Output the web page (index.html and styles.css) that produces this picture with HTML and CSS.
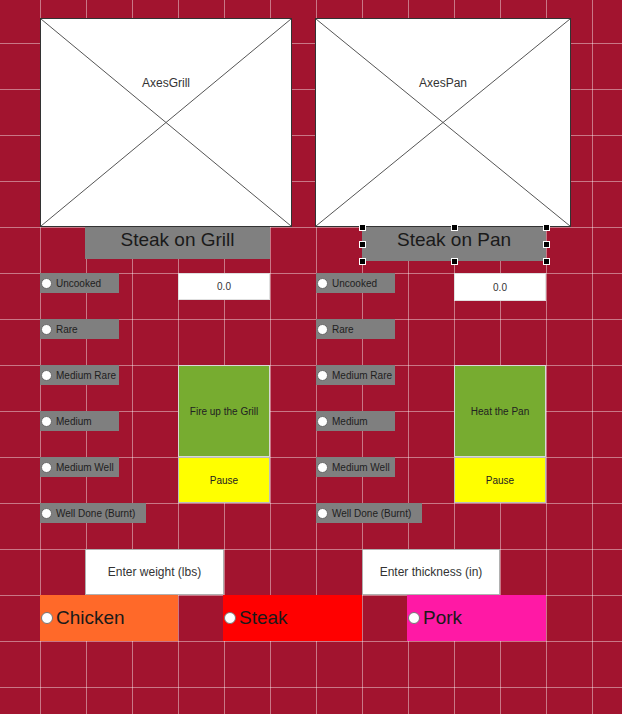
FILE: index.html
```html
<!DOCTYPE html>
<html lang="en">
<head>
<meta charset="utf-8">
<title>Steak App</title>
<link rel="stylesheet" href="styles.css">
</head>
<body>
<div class="canvas">
  <div class="axes axes-grill">
    <svg class="axes-x" preserveAspectRatio="none" viewBox="0 0 100 100"><line x1="0" y1="0" x2="100" y2="100" vector-effect="non-scaling-stroke"/><line x1="0" y1="100" x2="100" y2="0" vector-effect="non-scaling-stroke"/></svg>
    <span class="axes-label">AxesGrill</span>
  </div>
  <div class="axes axes-pan">
    <svg class="axes-x" preserveAspectRatio="none" viewBox="0 0 100 100"><line x1="0" y1="0" x2="100" y2="100" vector-effect="non-scaling-stroke"/><line x1="0" y1="100" x2="100" y2="0" vector-effect="non-scaling-stroke"/></svg>
    <span class="axes-label">AxesPan</span>
  </div>

  <div class="title title-grill">Steak on Grill</div>
  <div class="title title-pan">Steak on Pan
    <span class="handle h-tl"></span><span class="handle h-tm"></span><span class="handle h-tr"></span>
    <span class="handle h-ml"></span><span class="handle h-mr"></span>
    <span class="handle h-bl"></span><span class="handle h-bm"></span><span class="handle h-br"></span>
  </div>

  <label class="radio left r1"><span class="dot"></span>Uncooked</label>
  <label class="radio left r2"><span class="dot"></span>Rare</label>
  <label class="radio left r3"><span class="dot"></span>Medium Rare</label>
  <label class="radio left r4"><span class="dot"></span>Medium</label>
  <label class="radio left r5"><span class="dot"></span>Medium Well</label>
  <label class="radio left r6 wide"><span class="dot"></span>Well Done (Burnt)</label>

  <label class="radio right r1"><span class="dot"></span>Uncooked</label>
  <label class="radio right r2"><span class="dot"></span>Rare</label>
  <label class="radio right r3"><span class="dot"></span>Medium Rare</label>
  <label class="radio right r4"><span class="dot"></span>Medium</label>
  <label class="radio right r5"><span class="dot"></span>Medium Well</label>
  <label class="radio right r6 wide"><span class="dot"></span>Well Done (Burnt)</label>

  <div class="field field-grill">0.0</div>
  <div class="field field-pan">0.0</div>

  <div class="btn go go-grill">Fire up the Grill</div>
  <div class="btn go go-pan">Heat the Pan</div>
  <div class="btn pause pause-grill">Pause</div>
  <div class="btn pause pause-pan">Pause</div>

  <div class="entry entry-weight">Enter weight (lbs)</div>
  <div class="entry entry-thick">Enter thickness (in)</div>

  <label class="meat chicken"><span class="dot big"></span>Chicken</label>
  <label class="meat steak"><span class="dot big"></span>Steak</label>
  <label class="meat pork"><span class="dot big"></span>Pork</label>
</div>
</body>
</html>
```

FILE: styles.css
```css
html, body {
  margin: 0;
  padding: 0;
}
body {
  width: 622px;
  height: 714px;
  overflow: hidden;
  font-family: "Liberation Sans", Arial, sans-serif;
  color: #222;
}
.canvas {
  width: 622px;
  height: 714px;
  overflow: hidden;
  background-color: #a2142f;
  background-image:
    linear-gradient(to right, rgba(255,255,255,0.42) 1px, transparent 1px),
    linear-gradient(to bottom, rgba(255,255,255,0.42) 1px, transparent 1px);
  background-size: 46px 46px;
  background-position: 40px 43px;
  display: grid;
  grid-template-columns: 40px repeat(12, 46px) 30px;
  grid-template-rows: 43px repeat(14, 46px);
}

/* axes */
.axes {
  position: relative;
  background: #fff;
  border: 1px solid #333;
  box-sizing: border-box;
  grid-row: 1 / 6;
  align-self: start;
  justify-self: start;
  margin-top: 18px;
  height: 209px;
}
.axes-grill { grid-column: 2 / 8; width: 252px; }
.axes-pan { grid-column: 8 / 14; width: 256px; margin-left: -1px; }
.axes-x {
  position: absolute;
  inset: 0;
  width: 100%;
  height: 100%;
}
.axes-x line { stroke: #555; stroke-width: 1; }
.axes-label {
  position: absolute;
  left: 0;
  right: 0;
  top: 57px;
  text-align: center;
  font-size: 12px;
  color: #333;
}

/* titles */
.title {
  grid-row: 7 / 8;
  margin-top: -46px;
  background: #808080;
  font-size: 19px;
  color: #1a1a1a;
  text-align: center;
  box-sizing: border-box;
  align-self: start;
}
.title-grill {
  grid-column: 3 / 7;
  margin-left: -1px;
  height: 32px;
  padding-top: 2px;
  line-height: 22px;
}
.title-pan {
  grid-column: 9 / 13;
  height: 34px;
  padding-top: 2px;
  line-height: 22px;
  position: relative;
}
.handle {
  position: absolute;
  width: 5px;
  height: 5px;
  background: #000;
  box-shadow: 0 0 0 1px #fff;
  margin: -2px 0 0 -2px;
}
.h-tl { left: 0; top: 0; }
.h-tm { left: 50%; top: 0; }
.h-tr { left: 100%; top: 0; }
.h-ml { left: 0; top: 50%; }
.h-mr { left: 100%; top: 50%; }
.h-bl { left: 0; top: 100%; }
.h-bm { left: 50%; top: 100%; }
.h-br { left: 100%; top: 100%; }

/* radio buttons */
.radio {
  display: flex;
  align-items: center;
  background: #7f7f7f;
  font-size: 10px;
  color: #1e1e1e;
  height: 20px;
  width: 79px;
  box-sizing: border-box;
  padding-left: 1px;
  align-self: start;
  justify-self: start;
  white-space: nowrap;
}
.radio.wide { width: 106px; }
.radio.left { grid-column: 2 / 5; }
.radio.right { grid-column: 8 / 11; }
.r1 { grid-row: 7; }
.r2 { grid-row: 8; }
.r3 { grid-row: 9; }
.r4 { grid-row: 10; }
.r5 { grid-row: 11; }
.r6 { grid-row: 12; }
.dot {
  display: inline-block;
  width: 11px;
  height: 11px;
  border-radius: 50%;
  background: #fff;
  border: 1px solid #6a6a6a;
  box-sizing: border-box;
  margin-right: 4px;
  flex: none;
}
.dot.big {
  width: 12px;
  height: 12px;
  margin-right: 3px;
  border-color: #777;
}

/* fields */
.field {
  grid-row: 7;
  align-self: start;
  background: #fff;
  border: 1px solid #e0e0e0;
  box-sizing: border-box;
  font-size: 10px;
  color: #333;
  display: flex;
  align-items: center;
  justify-content: center;
}
.field-grill { grid-column: 5 / 7; height: 27px; }
.field-pan { grid-column: 11 / 13; height: 28px; }

/* buttons */
.btn {
  display: flex;
  align-items: center;
  justify-content: center;
  font-size: 10px;
  color: #222;
  box-sizing: border-box;
  border: 1px solid #d8d8d8;
}
.go {
  grid-row: 9 / 11;
  background: #77ac30;
}
.pause {
  grid-row: 11;
  background: #ffff00;
  border-color: #bdbdbd;
}
.go-grill, .pause-grill { grid-column: 5 / 7; }
.go-pan, .pause-pan { grid-column: 11 / 13; }

/* entry boxes */
.entry {
  grid-row: 13;
  background: #fff;
  border: 1px solid #b0b0b0;
  box-sizing: border-box;
  font-size: 12px;
  color: #333;
  display: flex;
  align-items: center;
  justify-content: center;
}
.entry-weight { grid-column: 3 / 6; margin-left: -1px; }
.entry-thick { grid-column: 9 / 12; }

/* meat radios */
.meat {
  grid-row: 14;
  display: flex;
  align-items: center;
  font-size: 19px;
  color: #1a1a1a;
  padding-left: 1px;
  padding-bottom: 1px;
  box-sizing: border-box;
}
.chicken { grid-column: 2 / 5; background: #ff6929; }
.steak { grid-column: 6 / 9; background: #ff0000; margin-left: -1px; }
.pork { grid-column: 10 / 13; background: #ff19a5; margin-left: -1px; }
```
